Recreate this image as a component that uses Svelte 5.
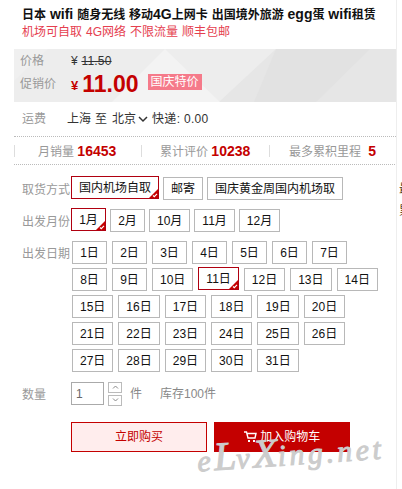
<script>
  const title = '日本 wifi 随身无线 移动4G上网卡 出国境外旅游 egg蛋 wifi租赁';
  // latin runs of the title render larger than the CJK ones
  const titleParts = title.split(/([\x00-\x7f]+)/).filter(Boolean);

  const months = [
    { label: '1月', selected: true },
    { label: '2月' },
    { label: '10月' },
    { label: '11月' },
    { label: '12月' },
  ];
  const methods = [
    { label: '国内机场自取', selected: true },
    { label: '邮寄' },
    { label: '国庆黄金周国内机场取' },
  ];
  const days = Array.from({ length: 31 }, (_, i) => ({
    label: `${i + 1}日`,
    selected: i === 10,
  }));
  const stats = [
    { label: '月销量', value: '16453', width: 127, pad: 23 },
    { label: '累计评价', value: '10238', width: 128, pad: 18 },
    { label: '最多累积里程', value: ' 5', width: 126, pad: 19 },
  ];
</script>

{#snippet choice(item)}
  <button class:selected={item.selected}>
    {item.label}
    {#if item.selected}
      <svg class="corner" width="9" height="9" viewBox="0 0 9 9">
        <path d="M9 0v9H0z" fill="#c40000"/>
        <path d="M4 6.5l1.3 1.2L8 4.8" fill="none" stroke="#fff" stroke-width="1.1"/>
      </svg>
    {/if}
  </button>
{/snippet}

<div class="shell">
  <div class="page">
    <h1>
      {#each titleParts as part}
        {#if /^[\x00-\x7f]/.test(part)}<span class="lat">{part}</span>{:else}{part}{/if}
      {/each}
    </h1>
    <p class="sub">机场可自取 4G网络 不限流量 顺丰包邮</p>

    <div class="price-box">
      <svg class="pattern" width="382" height="53" viewBox="0 0 382 53">
        <rect width="382" height="53" fill="#ededed"/>
        <path d="M0 0h34L0 32z" fill="#f0f0f0"/>
        <path d="M205 53L262 0h120v53z" fill="#e6e6e6"/>
        <path d="M262 0h94l-54 53H240z" fill="#e2e2e2"/>
        <path d="M151 0l55 53H98z" fill="#f3f3f3"/>
      </svg>
      <div class="price-row">
        <span class="label">价格</span>
        <span class="old">¥ <s>11.50</s></span>
      </div>
      <div class="price-row promo">
        <span class="label">促销价</span>
        <span class="yen">¥</span>
        <span class="now">11.00</span>
        <span class="tag">国庆特价</span>
      </div>
    </div>

    <div class="ship">
      <span class="label">运费</span>
      <span>上海</span><span class="to">至</span><span class="city">北京</span>
      <svg class="chev" width="10" height="7" viewBox="0 0 10 7"><path d="M1 1l4 4 4-4" fill="none" stroke="#333" stroke-width="1.5"/></svg>
      <span class="post">快递: 0.00</span>
    </div>

    <div class="stats">
      {#each stats as s}
        <div class="stat" style="width: {s.width}px; padding-left: {s.pad}px">{s.label} <b>{s.value}</b></div>
      {/each}
    </div>

    <div class="opt first">
      <span class="label">取货方式</span>
      <div class="choices">
        {#each methods as m}
          {@render choice(m)}
        {/each}
      </div>
    </div>
    <div class="opt">
      <span class="label">出发月份</span>
      <div class="choices">
        {#each months as m}
          {@render choice(m)}
        {/each}
      </div>
    </div>
    <div class="opt">
      <span class="label">出发日期</span>
      <div class="choices days">
        {#each days as d}
          {@render choice(d)}
        {/each}
      </div>
    </div>

    <div class="qty">
      <span class="label">数量</span>
      <div class="qty-input">1</div>
      <div class="spin">
        <span><svg width="7" height="4" viewBox="0 0 7 4"><path d="M1 3.5l2.5-2.5 2.5 2.5" fill="none" stroke="#888"/></svg></span>
        <span><svg width="7" height="4" viewBox="0 0 7 4"><path d="M1 .5l2.5 2.5 2.5-2.5" fill="none" stroke="#888"/></svg></span>
      </div>
      <span class="unit">件</span>
      <span class="stock">库存100件</span>
    </div>

    <div class="actions">
      <button class="buy">立即购买</button>
      <button class="cart">
        <svg width="13" height="12" viewBox="0 0 13 12"><path d="M0 1h2.5l1.5 6h7l1-4.5H3" fill="none" stroke="#fff" stroke-width="1.4"/><rect x="4" y="9" width="2" height="2" fill="#fff"/><rect x="9" y="9" width="2" height="2" fill="#fff"/></svg>
        加入购物车
      </button>
    </div>
  </div>

  <div class="peek">最<br>累</div>
  <div class="mark">e<span>L</span>v<span>X</span>ing.net</div>
</div>

<style>
  :global(body) {
    margin: 0;
    background: #fff;
  }

  .shell {
    position: relative;
    width: 402px;
    height: 489px;
    overflow: hidden;
    font: 12px/16px "Liberation Sans", "Noto Sans CJK SC", sans-serif;
    color: #333;
  }

  .page {
    box-sizing: border-box;
    width: 397px;
    height: 489px;
    padding: 6px 0 0 14px;
    border-right: 1px solid #eee;
  }

  h1 {
    margin: 0 0 0 8px;
    font-size: 12px;
    line-height: 16px;
    font-weight: 700;
    color: #111;
    white-space: nowrap;
  }

  .lat {
    font-size: 14px;
    white-space: pre;
  }

  .sub {
    margin: 1px 0 0 8px;
    color: #e5404f;
    word-spacing: 0.7px;
  }

  .label {
    color: #999;
  }

  .price-box {
    position: relative;
    box-sizing: border-box;
    height: 53px;
    margin-top: 9px;
    padding: 4px 0 0 6px;
  }

  .pattern {
    position: absolute;
    left: 0;
    top: 0;
    z-index: -1;
  }

  .price-row {
    display: flex;
    align-items: center;
    height: 16px;
  }

  .price-row .label {
    width: 51px;
  }

  .old {
    color: #333;
    letter-spacing: 0.2px;
  }

  .promo {
    height: 26px;
    margin-top: 2px;
  }

  .yen {
    margin-top: 3px;
    color: #c40000;
    font-size: 13px;
    font-weight: 700;
  }

  .now {
    margin-left: 4px;
    color: #c40000;
    font-size: 23px;
    font-weight: 700;
  }

  .tag {
    margin: -4px 0 0 9px;
    padding: 0 3px;
    background: #f57a8a;
    color: #fff;
    line-height: 16px;
  }

  .ship {
    display: flex;
    align-items: center;
    height: 34px;
    padding-left: 8px;
    border-bottom: 1px dotted #bbb;
  }

  .ship .label {
    width: 45px;
  }

  .to {
    margin: 0 5px 0 4px;
  }

  .chev {
    margin: 0 4px 0 2px;
  }

  .post {
    white-space: nowrap;
    letter-spacing: 0.3px;
  }

  .stats {
    display: flex;
    align-items: center;
    box-sizing: border-box;
    width: 381px;
    height: 28px;
    border-bottom: 1px dotted #bbb;
  }

  .stat {
    box-sizing: border-box;
    height: 12px;
    line-height: 12px;
    border-left: 1px solid #ddd;
    color: #999;
    white-space: pre;
  }

  .stat b {
    color: #c40000;
    font-size: 14px;
  }

  .opt {
    display: flex;
    margin: 9px 0 0 8px;
  }

  .opt.first {
    margin-top: 12px;
  }

  .opt > .label {
    flex: none;
    width: 49px;
    padding-top: 5px;
    line-height: 16px;
    white-space: nowrap;
  }

  .choices {
    display: flex;
    flex-wrap: wrap;
    gap: 4px;
    width: 322px;
  }

  .days {
    gap: 4px 5px;
    width: 310px;
    padding-left: 1px;
  }

  .choices button {
    position: relative;
    box-sizing: border-box;
    height: 23px;
    min-width: 35px;
    padding: 0 7px;
    border: 1px solid #b8b8b8;
    border-radius: 0;
    background: #fff;
    color: #111;
    font: inherit;
  }

  .choices button.selected {
    border-color: #b00010;
    margin-top: -1px;
    margin-bottom: 1px;
  }

  .corner {
    position: absolute;
    right: 0;
    bottom: 0;
  }

  .qty {
    display: flex;
    align-items: center;
    margin: 9px 0 0 8px;
    height: 25px;
  }

  .qty > .label {
    width: 49px;
    padding-top: 3px;
  }

  .qty-input {
    box-sizing: border-box;
    width: 33px;
    height: 23px;
    padding-left: 4px;
    border: 1px solid #aaa;
    line-height: 22px;
    color: #666;
  }

  .spin {
    display: flex;
    flex-direction: column;
    gap: 2px;
    margin-left: 4px;
  }

  .spin span {
    display: flex;
    align-items: center;
    justify-content: center;
    box-sizing: border-box;
    width: 14px;
    height: 11px;
    border: 1px solid #bbb;
  }

  .unit {
    margin-left: 8px;
    color: #888;
  }

  .stock {
    margin-left: 18px;
    color: #888;
  }

  .actions {
    display: flex;
    gap: 7px;
    margin: 16px 0 0 57px;
  }

  .actions button {
    box-sizing: border-box;
    width: 136px;
    height: 30px;
    padding: 0;
    border-radius: 0;
    font: inherit;
  }

  .actions .buy {
    border: 1px solid #c40000;
    background: #ffeded;
    color: #c40000;
  }

  .actions .cart {
    border: none;
    background: #c40000;
    color: #fff;
  }

  .cart svg {
    vertical-align: -2px;
  }

  .peek {
    position: absolute;
    left: 399px;
    top: 178px;
    line-height: 22px;
    color: #5a4020;
  }

  .mark {
    position: absolute;
    left: 197px;
    top: 434px;
    font: italic 400 30px/36px "Liberation Serif", serif;
    letter-spacing: 3.5px;
    color: #ccc;
    -webkit-text-stroke: 1px #ccc;
    transform: rotate(-4deg);
    white-space: nowrap;
  }

  .mark span {
    font-size: 40px;
    letter-spacing: 0;
  }
</style>
